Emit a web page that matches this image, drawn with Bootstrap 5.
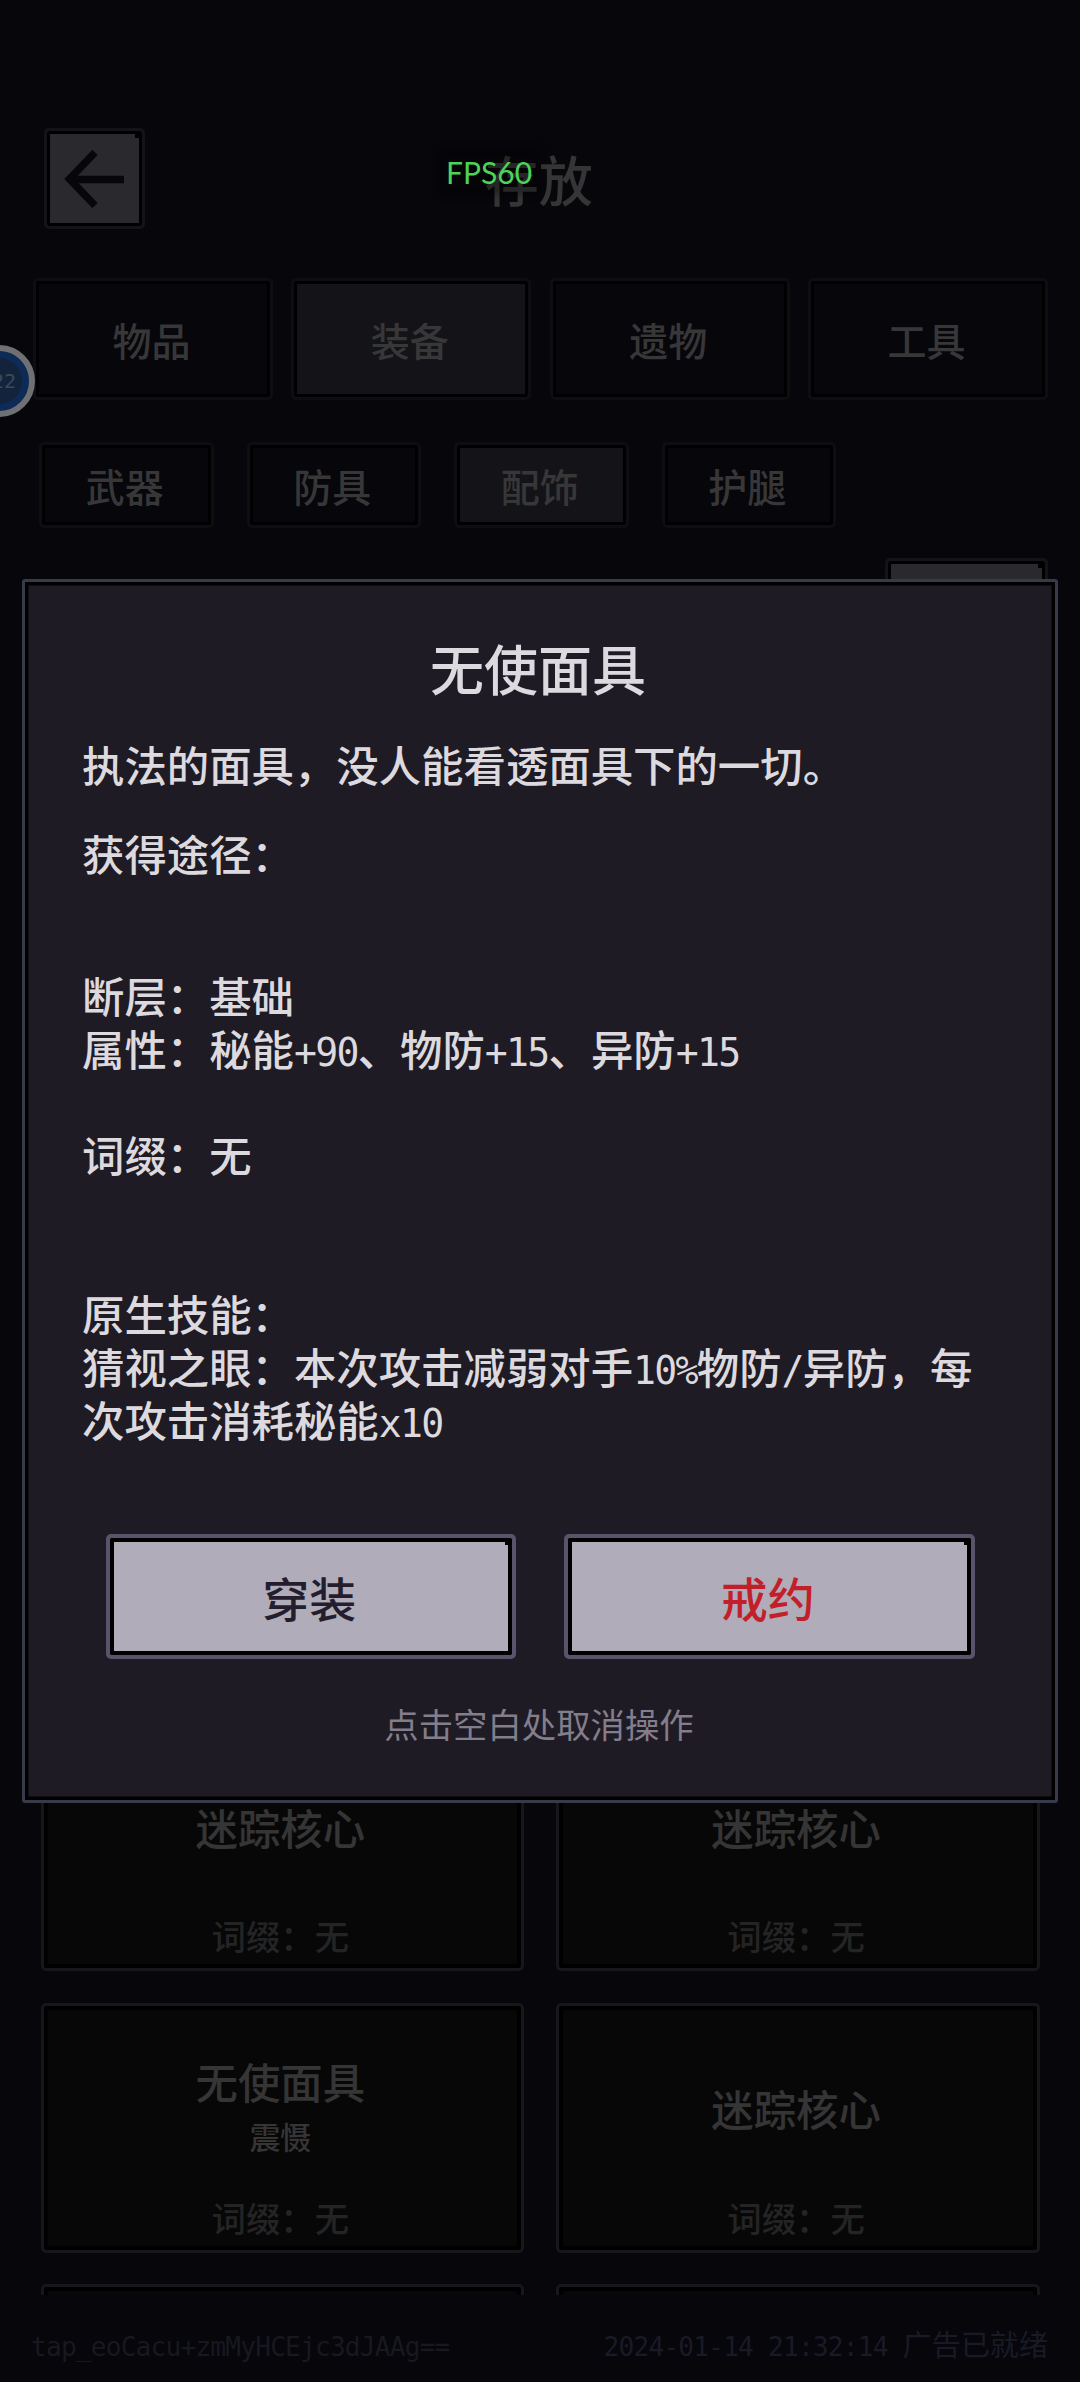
<!DOCTYPE html>
<html lang="zh-CN">
<head>
<meta charset="utf-8">
<meta name="viewport" content="width=device-width, initial-scale=1">
<title>存放</title>
<link rel="stylesheet" href="https://cdn.jsdelivr.net/npm/bootstrap@5.3.0/dist/css/bootstrap.min.css">
<style>
  body { margin: 0; background: #06060b; color: #353536; font-family: "Noto Sans CJK SC", sans-serif; font-weight: 500; }
  .app { width: 1080px; height: 2382px; }
  .half { font-family: "DejaVu Sans Mono", monospace; font-size: .9em; letter-spacing: -.0455em; line-height: 1; }

  /* pixel frame: outer line plus black inner line */
  .frame { background: #06060b; border: 3px solid #0d0d12; border-radius: 5px; box-shadow: inset 0 0 0 3px #000; position: relative; }
  .frame-on { background: #141318; }
  .frame-lit { background: #2a292e; border-color: #131318; }
  .frame-lit::after, .choice::after { content: ""; position: absolute; top: 3px; right: 3px; width: 4px; height: 4px; background: #000; }

  .head { padding: 128px 43px 0 43.5px; height: 229px; }
  .back { width: 101px; height: 101px; }
  .screen-title { font-size: 54px; line-height: 60px; color: #353536; padding-right: 3px; }
  .tabs { margin: 49px 32px 0 33px; gap: 18.5px; }
  .tabs .frame { height: 122px; font-size: 39px; padding-right: 3px; color: #373738; }
  .subtabs { margin: 42px 0 0 39px; gap: 33px; }
  .subtabs .frame { width: 174.5px; height: 86px; font-size: 39px; padding-right: 3px; color: #373738; }
  .actions { margin: 30px 32px 0 0; }
  .actions .frame { width: 163px; height: 100px; }

  .items { margin: 1063px 40px 0 40.5px; height: 574px; }
  .items-grid { display: grid; grid-template-columns: 1fr 1fr; gap: 31.5px 32px; }
  .item { height: 250px; background: #070708; border: 3.5px solid #16161b; border-radius: 5px; box-shadow: inset 0 0 0 4px #000; padding-right: 4px; }
  .item-name { height: 184px; padding-top: 20px; }
  .item-name b { font-weight: 500; font-size: 42.4px; line-height: 53px; }
  .item-name span { font-size: 31px; line-height: 58px; margin-bottom: -4px; }
  .item-affix { font-size: 34.4px; line-height: 54px; color: #242425; }
  .item:nth-child(n+5) { background: #06060b; }

  .status { margin: 28px 32px 0 31px; font-size: 29.1px; line-height: 40px; font-weight: 400; color: #18181f; }
  .status .half { letter-spacing: -.82px; }
  .status .clock { color: #1a1a27; }

  .sheet { top: 579px; left: 22px; width: 1036px; height: 1224px; background: #1f1b24; border: 3.5px solid #373a48; border-radius: 3px; box-shadow: inset 0 0 0 3.5px #000; color: #dcd9df; padding: 55.5px 0 0; }
  .sheet h1 { font-size: 54px; line-height: 60px; font-weight: 500; margin: 0; padding-right: 4px; }
  .copy { font-size: 42.4px; line-height: 53.05px; padding-left: 57px; white-space: nowrap; }
  .desc { margin-top: 39.5px; }
  .source { margin-top: 35.5px; }
  .stats { margin-top: 89.5px; }
  .choices { margin: 88px 80.5px 0; gap: 48px; }
  .choice, .choice:hover { position: relative; height: 125.5px; background: #b0acb9; border: 4px solid #59536b; border-radius: 5px; box-shadow: inset 0 0 0 4px #000; color: #241d2e; font-size: 47px; font-weight: 500; padding: 2px 3px 0 0; }
  .choice.danger { color: #c31f2b; }
  .hint { margin-top: 43.5px; font-size: 34.4px; line-height: 40px; font-weight: 400; color: #837e8b; padding-right: 2px; }

  .fps { left: 444px; top: 154px; padding: 0 2px; font: 30px/36px Lato, sans-serif; color: #4ed35a; background: rgba(3, 3, 4, .3); box-shadow: 0 0 7px 5px rgba(3, 3, 4, .3); }
  .bubble { left: -37px; top: 345px; width: 72px; height: 72px; border-radius: 50%; background: #12233b; border: 6.5px solid #6f7074; box-shadow: inset 0 0 0 7px #0d2b56; font: 20px/1 "DejaVu Sans Mono", monospace; color: #3b4a58; padding-right: 13px; }
</style>
</head>
<body>
<main class="app position-relative overflow-hidden d-flex flex-column">
  <header class="head d-flex align-items-center">
    <div class="back frame frame-lit d-flex align-items-center justify-content-center">
      <svg width="60" height="58" viewBox="0 0 60 58" fill="none" stroke="#06060b" stroke-width="7.5"><path d="M60 29.5H7M31 2.5 5.5 29 31 55.5"/></svg>
    </div>
    <div class="screen-title flex-grow-1 text-center">存放</div>
    <div class="back invisible"></div>
  </header>

  <nav class="tabs d-flex">
    <div class="frame flex-fill d-flex align-items-center justify-content-center">物品</div>
    <div class="frame frame-on flex-fill d-flex align-items-center justify-content-center">装备</div>
    <div class="frame flex-fill d-flex align-items-center justify-content-center">遗物</div>
    <div class="frame flex-fill d-flex align-items-center justify-content-center">工具</div>
  </nav>

  <nav class="subtabs d-flex">
    <div class="frame d-flex align-items-center justify-content-center">武器</div>
    <div class="frame d-flex align-items-center justify-content-center">防具</div>
    <div class="frame frame-on d-flex align-items-center justify-content-center">配饰</div>
    <div class="frame d-flex align-items-center justify-content-center">护腿</div>
  </nav>

  <div class="actions d-flex justify-content-end"><div class="frame frame-lit"></div></div>

  <section class="items flex-shrink-0 overflow-hidden">
    <div class="items-grid text-center">
      <div class="item"><div class="item-name d-flex flex-column align-items-center justify-content-center"><b>迷踪核心</b></div><div class="item-affix">词缀：无</div></div>
      <div class="item"><div class="item-name d-flex flex-column align-items-center justify-content-center"><b>迷踪核心</b></div><div class="item-affix">词缀：无</div></div>
      <div class="item"><div class="item-name d-flex flex-column align-items-center justify-content-center"><b>无使面具</b><span>震慑</span></div><div class="item-affix">词缀：无</div></div>
      <div class="item"><div class="item-name d-flex flex-column align-items-center justify-content-center"><b>迷踪核心</b></div><div class="item-affix">词缀：无</div></div>
      <div class="item"></div>
      <div class="item"></div>
    </div>
  </section>

  <footer class="status d-flex justify-content-between">
    <div><span class="half">tap_eoCacu+zmMyHCEjc3dJAAg==</span></div>
    <div class="clock"><span class="half">2024-01-14 21:32:14 </span>广告已就绪</div>
  </footer>

  <div class="bubble position-absolute d-flex align-items-center justify-content-end">22</div>
  <div class="fps position-absolute">FPS60</div>

  <section class="sheet position-absolute" role="dialog">
    <h1 class="text-center">无使面具</h1>
    <div class="copy desc">执法的面具，没人能看透面具下的一切。</div>
    <div class="copy source">获得途径：</div>
    <div class="copy stats">
      断层：基础<br>
      属性：秘能<span class="half">+90</span>、物防<span class="half">+15</span>、异防<span class="half">+15</span><br>
      <br>
      词缀：无<br>
      <br>
      <br>
      原生技能：<br>
      猜视之眼：本次攻击减弱对手<span class="half">10%</span>物防<span class="half">/</span>异防，每<br>
      次攻击消耗秘能<span class="half">x10</span>
    </div>
    <div class="choices d-flex">
      <button class="choice btn flex-fill">穿装</button>
      <button class="choice danger btn flex-fill">戒约</button>
    </div>
    <div class="hint text-center">点击空白处取消操作</div>
  </section>
</main>
<script src="https://cdn.jsdelivr.net/npm/bootstrap@5.3.0/dist/js/bootstrap.bundle.min.js"></script>
</body>
</html>
